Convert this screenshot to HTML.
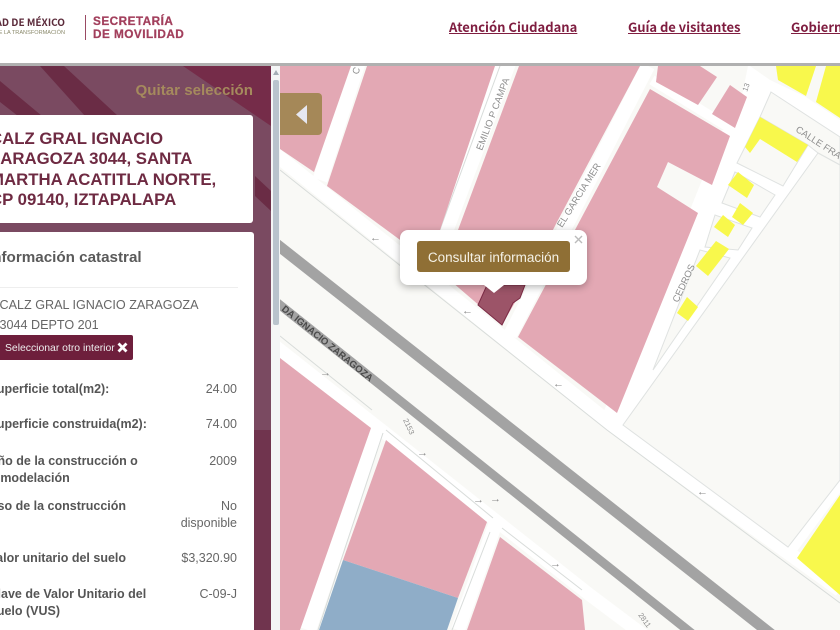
<!DOCTYPE html>
<html lang="es"><head><meta charset="utf-8"><title>Información catastral</title>
<style>
html,body{margin:0;padding:0;background:#fff}
body{width:840px;height:630px;overflow:hidden;font-family:"Liberation Sans",sans-serif}
#w{position:relative;width:840px;height:630px;overflow:hidden;filter:blur(.35px)}
.a{position:absolute;white-space:nowrap}
.nav{font:bold 13px "Noto Sans CJK SC","Liberation Sans",sans-serif;color:#7f1d40;text-decoration:underline;top:17px;line-height:20px}
.l{left:-11.5px;width:161px;font-weight:bold;font-size:12.5px;line-height:16.5px;color:#555;white-space:normal}
.v{right:603px;text-align:right;font-size:12.5px;line-height:16.5px;color:#666;white-space:normal}
</style></head><body><div id="w">
<div class="a" style="left:-40px;top:15px;width:105px;text-align:right;font:bold 10px 'Noto Sans CJK SC','Liberation Sans',sans-serif;color:#5b2a3a;line-height:14px">IDAD DE MÉXICO</div>
<div class="a" style="left:-40px;top:28px;width:105px;text-align:right;font-size:5.6px;color:#8b8a6c;line-height:10px">DE LA TRANSFORMACIÓN</div>
<div class="a" style="left:85px;top:15px;width:1px;height:25px;background:#9a4a63"></div>
<div class="a" style="left:93px;top:14px;font:bold 11.8px/14px 'Liberation Sans',sans-serif;letter-spacing:.45px;color:#a23f5c;-webkit-text-stroke:.25px #a23f5c">SECRETARÍA</div>
<div class="a" style="left:93px;top:27px;font:bold 11.8px/14px 'Liberation Sans',sans-serif;letter-spacing:.45px;color:#a23f5c;-webkit-text-stroke:.25px #a23f5c">DE MOVILIDAD</div>
<div class="a nav" style="left:449px">Atención Ciudadana</div>
<div class="a nav" style="left:628px;letter-spacing:-.05px">Guía de visitantes</div>
<div class="a nav" style="left:791px">Gobierno</div>
<div class="a" style="left:0;top:63px;width:840px;height:3px;background:#b0b0b0"></div>

<svg class="a" style="left:280px;top:66px" width="560" height="564" viewBox="280 66 560 564" font-family="Liberation Sans,sans-serif">
<rect x="280" y="66" width="560" height="564" fill="#f9f9f6"/>
<g fill="none" stroke="#fff" stroke-linecap="butt" stroke-linejoin="round">
<polyline points="270,150 618,430 840,590" stroke-width="14"/>
<polyline points="270,342 590,595 650,640" stroke-width="13"/>
<line x1="359" y1="60" x2="320" y2="180" stroke-width="15"/>
<line x1="507" y1="60" x2="436" y2="250" stroke-width="20"/>
<line x1="648" y1="66" x2="510" y2="335" stroke-width="14"/>
<line x1="652" y1="80" x2="735" y2="131" stroke-width="10"/>
<line x1="378" y1="425" x2="308" y2="630" stroke-width="16"/>
<line x1="495" y1="525" x2="458" y2="630" stroke-width="14"/>
<line x1="840" y1="480" x2="790" y2="548" stroke-width="15"/>
</g>
<polygon points="750,66 770,80 806,97 840,120 840,165 818,153 623,425 612,425 600,420 690,210 722,130 735,130 748,66" fill="#fff"/>
<g fill="#f9f9f6" stroke="#dfe2e1" stroke-width="1">
<polygon points="771,92 840,137 840,165 818,153 808,145 760,117"/>
<polygon points="737,163 783,186 808,145 760,117"/>
<polygon points="722,203 760,217 775,195 735,172"/>
<polygon points="705,247 715,215 752,228 738,250"/>
<polygon points="700,250 730,258 653,370"/>
<polygon points="818,153 840,165 840,480 788,547 623,425"/>
</g>
<g fill="none" stroke="#d8dcda" stroke-width="1">
<polyline points="280,170 607,430 840,603"/>
<line x1="280" y1="336" x2="372" y2="410"/>
<line x1="500" y1="66" x2="438" y2="235"/>
<line x1="386" y1="430" x2="493" y2="518"/>
<line x1="502" y1="528" x2="582" y2="590"/>
<line x1="383" y1="433" x2="318" y2="630"/>
<line x1="490" y1="532" x2="452" y2="630"/>
</g>
<g fill="#e3a8b4">
<polygon points="280,66 351,66 314,172 280,149"/>
<polygon points="367,66 495,66 440,230 430,262 327,186"/>
<polygon points="519,66 640,66 557,222 525,285 502,325 445,276 458,230"/>
<polygon points="650,89 730,136 712,185 668,162 657,187 698,213 617,413 518,337"/>
<polygon points="658,66 700,66 717,77 698,105 656,82"/>
<polygon points="730,85 747,97 735,128 712,114"/>
<polygon points="280,358 371,428 300,630 280,630"/>
<polygon points="386,440 487,522 458,598 343,560"/>
<polygon points="500,537 582,600 585,630 467,630"/>
</g>
<polygon points="343,560 458,598 447,630 319,630" fill="#8fadc8"/>
<g fill="#f8f84c">
<polygon points="776,66 816,66 806,96 778,80"/>
<polygon points="826,66 840,66 840,118 816,102"/>
<polygon points="760,117 808,145 797,162 760,139 750,153 745,147"/>
<polygon points="738,172 754,185 747,198 728,185"/>
<polygon points="740,203 753,213 743,225 732,217"/>
<polygon points="723,215 735,225 728,237 714,227"/>
<polygon points="716,241 729,249 708,276 696,266"/>
<polygon points="687,297 698,307 688,321 677,313"/>
<polygon points="840,495 797,558 840,595"/>
</g>
<g fill="none" stroke="#a3a3a3" stroke-linecap="butt">
<line x1="270" y1="239" x2="790" y2="649" stroke-width="11"/>
<line x1="270" y1="297" x2="700" y2="640" stroke-width="9"/>
</g>
<polygon points="487,285 525,285 520,298 513,303 502,325 478,305" fill="#9c5468" stroke="#7b2b45" stroke-width="1"/>
<g font-size="9.5" fill="#8e8e8e">
<text transform="translate(482,151) rotate(-69)">EMILIO P CAMPA</text>
<text transform="translate(562,228) rotate(-58)">EL GARCIA MER</text>
<text transform="translate(795,131) rotate(33)">CALLE FRA</text>
<text transform="translate(678,303) rotate(-65)">CEDROS</text>
<text transform="translate(358,75) rotate(-70)">C</text>
<text transform="translate(403,420) rotate(65)" font-size="7.5">2153</text>
<text transform="translate(638,615) rotate(55)" font-size="7.5">2811</text>
<text transform="translate(747,92) rotate(-70)" font-size="7.5">13</text>
</g>
<text transform="translate(281,310) rotate(39)" font-size="9.6" font-weight="bold" fill="#4a4a4a">DA IGNACIO ZARAGOZA</text>
<g font-size="11" fill="#8a8a8a">
<text x="370" y="241">←</text><text x="462" y="314">←</text><text x="553" y="387">←</text><text x="697" y="495">←</text>
<text x="320" y="376">→</text><text x="417" y="456">→</text><text x="473" y="503">→</text><text x="490" y="502">→</text><text x="550" y="567">→</text>
</g>
</svg>

<!-- sidebar -->
<div class="a" style="left:0;top:66px;width:271px;height:564px;overflow:hidden;background:#70344e">
<svg width="271" height="564" style="position:absolute;left:0;top:0">
<rect width="271" height="370" fill="#7a4a61"/>
<polygon points="183,0 271,0 271,60" fill="#752c49"/>
<polygon points="40,0 64,0 118,50 85,50" fill="#6a2c45"/>
<polygon points="0,15 42,50 18,50 0,36" fill="#6a2c45"/>
<polygon points="255,110 271,125 271,145 255,130" fill="#6a2c45"/>
<rect y="364" width="271" height="200" fill="#70344e"/>
</svg>
<div class="a" style="right:18px;top:15px;font-weight:bold;font-size:15.1px;line-height:20px;color:#a58a5d">Quitar selección</div>
</div>
<div class="a" style="left:-20px;top:115px;width:273px;height:108px;background:#fff;border-radius:3px"></div>
<div class="a" style="left:-20px;top:232px;width:274px;height:420px;background:#fff;border-radius:3px"></div>
<div class="a" style="left:-10px;top:129px;font-weight:bold;font-size:16.8px;line-height:20.4px;color:#6e2a42">CALZ GRAL IGNACIO<br>ZARAGOZA 3044, SANTA<br>MARTHA ACATITLA NORTE,<br>CP 09140, IZTAPALAPA</div>
<div class="a" style="left:-12px;top:249px;font-weight:bold;font-size:15.2px;line-height:18px;color:#5a5a5a">Información catastral</div>
<div class="a" style="left:0;top:287px;width:238px;height:1px;background:#eee"></div>
<div class="a" style="left:-.5px;top:295px;font-size:12.6px;line-height:20px;color:#666">CALZ GRAL IGNACIO ZARAGOZA<br>3044 DEPTO 201</div>
<div class="a" style="left:-10px;top:335px;width:143px;height:25px;background:#6e1f3c;border-radius:2px"></div>
<div class="a" style="left:5px;top:342px;font-size:10.4px;line-height:14px;color:#eee">Seleccionar otro interior</div>
<svg class="a" style="left:117px;top:342px" width="11" height="11"><path d="M1.5 1.5L9.5 9.5M9.5 1.5L1.5 9.5" stroke="#fff" stroke-width="2.8" fill="none"/></svg>

<div class="a l" style="top:381px">Superficie total(m2):</div><div class="a v" style="top:381px">24.00</div>
<div class="a l" style="top:416px;width:175px">Superficie construida(m2):</div><div class="a v" style="top:416px">74.00</div>
<div class="a l" style="top:453px">Año de la construcción o remodelación</div><div class="a v" style="top:453px">2009</div>
<div class="a l" style="top:498px">Uso de la construcción</div><div class="a v" style="top:498px;width:70px">No disponible</div>
<div class="a l" style="top:550px">Valor unitario del suelo</div><div class="a v" style="top:550px">$3,320.90</div>
<div class="a l" style="top:586px;width:165px">Clave de Valor Unitario del Suelo (VUS)</div><div class="a v" style="top:586px">C-09-J</div>

<!-- scrollbar -->
<div class="a" style="left:271px;top:66px;width:9px;height:564px;background:#f4f5f6"></div>
<div class="a" style="left:273px;top:80px;width:6px;height:245px;background:#b9c3cd;border-radius:2px"></div>
<svg class="a" style="left:272px;top:69px" width="8" height="8"><polygon points="4,1 7,6 1,6" fill="#a4adb6"/></svg>

<!-- toggle -->
<div class="a" style="left:280px;top:93px;width:42px;height:42px;background:#a58858;border-radius:0 4px 4px 0"></div>
<svg class="a" style="left:296px;top:105px" width="12" height="19"><polygon points="11,0 11,19 0,9.5" fill="#e6e7f0"/></svg>

<!-- popup -->
<div class="a" style="left:400px;top:230px;width:187px;height:55px;background:#fff;border-radius:8px;box-shadow:0 2px 8px rgba(0,0,0,.3)"></div>
<svg class="a" style="left:484px;top:285px" width="20" height="9"><polygon points="0,0 20,0 10,8" fill="#fff"/></svg>
<div class="a" style="left:417px;top:241px;width:153px;height:31px;background:#8f6f35;border-radius:3px;text-align:center;font-size:13.5px;line-height:33px;color:#f4f1e6">Consultar información</div>
<svg class="a" style="left:574px;top:235px" width="9" height="9"><path d="M1 1L8 8M8 1L1 8" stroke="#bbb" stroke-width="1.4" fill="none"/></svg>
</div></body></html>
